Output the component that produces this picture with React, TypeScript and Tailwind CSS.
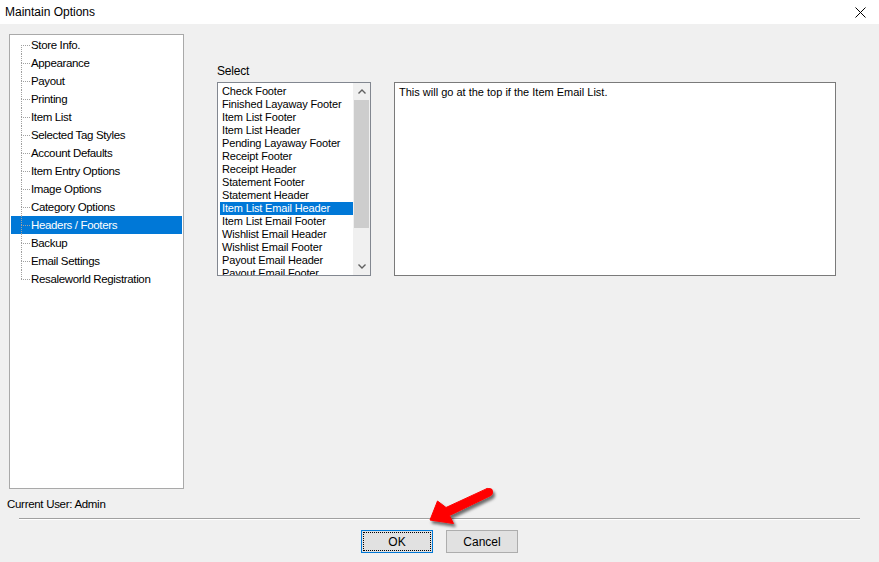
import React from 'react';

const SECTIONS = [
  'Store Info.',
  'Appearance',
  'Payout',
  'Printing',
  'Item List',
  'Selected Tag Styles',
  'Account Defaults',
  'Item Entry Options',
  'Image Options',
  'Category Options',
  'Headers / Footers',
  'Backup',
  'Email Settings',
  'Resaleworld Registration',
];

const TEMPLATES = [
  'Check Footer',
  'Finished Layaway Footer',
  'Item List Footer',
  'Item List Header',
  'Pending Layaway Footer',
  'Receipt Footer',
  'Receipt Header',
  'Statement Footer',
  'Statement Header',
  'Item List Email Header',
  'Item List Email Footer',
  'Wishlist Email Header',
  'Wishlist Email Footer',
  'Payout Email Header',
  'Payout Email Footer',
];

const FONT = { fontFamily: '"Liberation Sans", Arial, sans-serif' };

function TreeRow({ label, index, last, selected }: { label: string; index: number; last: boolean; selected: boolean }) {
  return (
    <div className={`flex h-[18px] items-stretch pl-[10px] ${selected ? 'bg-[#0078d7] text-white' : 'text-black'}`}>
      {/* dotted tree connector */}
      <div className="flex w-[9px] flex-col">
        <div className={`h-[9px] ${index === 0 ? '' : 'border-l border-dotted border-[#a0a0a0]'}`} />
        <div className={`flex-1 border-t border-dotted border-[#a0a0a0] ${last ? '' : 'border-l'}`} />
      </div>
      <span className="ml-[1px] flex items-center pt-[2px] text-[11.5px] leading-none tracking-[-0.35px]">{label}</span>
    </div>
  );
}

function Chevron({ up }: { up?: boolean }) {
  return (
    <svg width="8" height="5" viewBox="0 0 8 5">
      <path d={up ? 'M0.5 4.5 L4 1 L7.5 4.5' : 'M0.5 0.5 L4 4 L7.5 0.5'} fill="none" stroke="#606060" strokeWidth="1.4" />
    </svg>
  );
}

function RedArrow() {
  return (
    <svg className="pointer-events-none absolute left-0 top-0" width="879" height="562">
      <defs>
        <filter id="arrowShadow" x="-20%" y="-20%" width="140%" height="140%">
          <feDropShadow dx="2" dy="3" stdDeviation="1.5" floodColor="#000" floodOpacity="0.55" />
        </filter>
      </defs>
      <g filter="url(#arrowShadow)">
        <polygon
          points="490.7,495.6 449.5,515.5 453.5,523.5 430,520 437.5,501 446,507.5 487.3,488.4"
          fill="#ff0000"
          stroke="#ff0000"
          strokeWidth="1"
          strokeLinejoin="round"
        />
        <circle cx="489" cy="492" r="4" fill="#ff0000" />
      </g>
    </svg>
  );
}

export default function App() {
  return (
    <div className="relative flex h-[562px] w-[879px] flex-col overflow-hidden bg-[#f0f0f0]" style={FONT}>
      {/* title bar */}
      <div className="flex h-[24px] items-center justify-between bg-white pl-[5px] pr-[13px]">
        <span className="text-[12px] text-black">Maintain Options</span>
        <svg width="11" height="11" viewBox="0 0 11 11">
          <path d="M0.5 0.5 L10.5 10.5 M10.5 0.5 L0.5 10.5" stroke="#000" strokeWidth="1" />
        </svg>
      </div>

      <div className="flex pl-[9px] pt-[10px]">
        {/* section tree */}
        <div className="h-[455px] w-[175px] border border-[#a9a9a9] bg-white px-[1px] pt-[1px]">
          {SECTIONS.map((s, i) => (
            <TreeRow key={s} label={s} index={i} last={i === SECTIONS.length - 1} selected={s === 'Headers / Footers'} />
          ))}
        </div>

        <div className="ml-[33px] flex flex-col pt-[31px]">
          <span className="text-[12px] leading-[13px] tracking-[-0.2px] text-black">Select</span>
          <div className="mt-[4px] flex gap-[23px]">
            {/* template list */}
            <div className="flex h-[194px] w-[154px] border border-[#828790] bg-white">
              <div className="flex-1 overflow-hidden pl-[2px] pt-[2px]">
                {TEMPLATES.map((t) => (
                  <div
                    key={t}
                    className={`h-[13px] pl-[2px] text-[11px] leading-[13px] tracking-[-0.15px] whitespace-nowrap ${
                      t === 'Item List Email Header' ? 'bg-[#0078d7] text-white' : 'text-black'
                    }`}
                  >
                    {t}
                  </div>
                ))}
              </div>
              <div className="flex w-[17px] flex-col bg-[#f0f0f0]">
                <div className="flex h-[17px] items-center justify-center">
                  <Chevron up />
                </div>
                <div className="mx-[1px] h-[128px] bg-[#cdcdcd]" />
                <div className="flex-1" />
                <div className="flex h-[17px] items-center justify-center">
                  <Chevron />
                </div>
              </div>
            </div>

            {/* template text */}
            <div className="h-[194px] w-[442px] border border-[#7a7a7a] bg-white px-[4px] pt-[3px] text-[11px] leading-[13px] text-black">
              This will go at the top if the Item Email List.
            </div>
          </div>
        </div>
      </div>

      <div className="mt-[8px] pl-[7px] text-[11.5px] leading-[14px] tracking-[-0.3px] text-black">Current User: Admin</div>

      <div className="ml-[19px] mt-[7px] h-[2px] w-[841px] border-t border-[#a0a0a0] border-b-white bg-white" />

      <div className="mt-[10px] flex justify-center gap-[13px]">
        <button className="flex h-[23px] w-[72px] items-center justify-center border border-[#0078d7] bg-[#e1e1e1] p-[1px]">
          <span className="flex h-full w-full items-center justify-center border border-dotted border-black text-[12px] text-black">
            OK
          </span>
        </button>
        <button className="flex h-[23px] w-[72px] items-center justify-center border border-[#adadad] bg-[#e1e1e1] text-[12px] text-black">
          Cancel
        </button>
      </div>

      <RedArrow />
    </div>
  );
}
